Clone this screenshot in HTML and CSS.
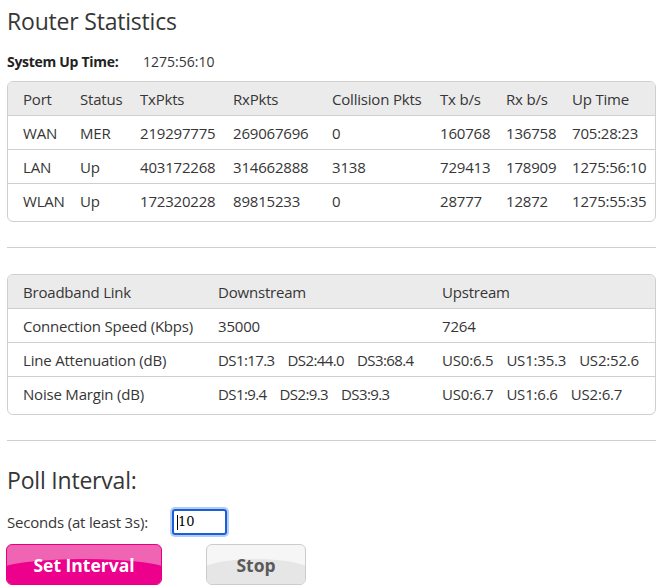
FILE: index.html
```html
<!DOCTYPE html>
<html>
<head>
<meta charset="utf-8">
<link rel="stylesheet" href="styles.css">
</head>
<body>
<div class="page">
  <h1 class="title">Router Statistics</h1>
  <div class="uptime"><span class="uptime-label">System Up Time:</span><span class="uptime-value">1275:56:10</span></div>

  <div class="box">
    <table class="stats">
      <colgroup>
        <col class="c1"><col class="c2"><col class="c3"><col class="c4"><col class="c5"><col class="c6"><col class="c7"><col class="c8">
      </colgroup>
      <thead>
        <tr><th>Port</th><th>Status</th><th>TxPkts</th><th>RxPkts</th><th>Collision Pkts</th><th>Tx b/s</th><th>Rx b/s</th><th>Up Time</th></tr>
      </thead>
      <tbody>
        <tr><td>WAN</td><td>MER</td><td>219297775</td><td>269067696</td><td>0</td><td>160768</td><td>136758</td><td>705:28:23</td></tr>
        <tr><td>LAN</td><td>Up</td><td>403172268</td><td>314662888</td><td>3138</td><td>729413</td><td>178909</td><td>1275:56:10</td></tr>
        <tr><td>WLAN</td><td>Up</td><td>172320228</td><td>89815233</td><td>0</td><td>28777</td><td>12872</td><td>1275:55:35</td></tr>
      </tbody>
    </table>
  </div>

  <hr class="rule">

  <div class="box">
    <table class="stats">
      <colgroup>
        <col class="d1"><col class="d2"><col class="d3">
      </colgroup>
      <thead>
        <tr><th>Broadband Link</th><th>Downstream</th><th>Upstream</th></tr>
      </thead>
      <tbody>
        <tr><td>Connection Speed (Kbps)</td><td>35000</td><td>7264</td></tr>
        <tr><td>Line Attenuation (dB)</td><td><span class="v ds">DS1:17.3</span><span class="v ds">DS2:44.0</span><span class="v ds">DS3:68.4</span></td><td><span class="v">US0:6.5</span><span class="v">US1:35.3</span><span class="v">US2:52.6</span></td></tr>
        <tr><td>Noise Margin (dB)</td><td><span class="v ds">DS1:9.4</span><span class="v ds">DS2:9.3</span><span class="v ds">DS3:9.3</span></td><td><span class="v">US0:6.7</span><span class="v">US1:6.6</span><span class="v">US2:6.7</span></td></tr>
      </tbody>
    </table>
  </div>

  <hr class="rule">

  <h2 class="subtitle">Poll Interval:</h2>
  <div class="field">
    <label class="field-label">Seconds (at least 3s):</label>
    <div class="input"><span class="caret"></span>10</div>
  </div>
  <div class="buttons">
    <button class="btn btn-pink"><span class="btn-text">Set Interval</span></button>
    <button class="btn btn-grey"><span class="btn-text">Stop</span></button>
  </div>
</div>
</body>
</html>
```
FILE: styles.css
```css
html, body {
  margin: 0;
  padding: 0;
  background: #fff;
}
body {
  font-family: "Open Sans", "Noto Sans", sans-serif;
  color: #363636;
  font-size: 15px;
}
.page {
  padding: 0 3px 0 7px;
}
.title {
  margin: 0;
  padding-top: 6px;
  font-size: 23px;
  font-weight: 400;
  line-height: 30px;
  color: #363636;
  letter-spacing: -0.2px;
}
.uptime {
  margin-top: 15px;
  display: flex;
  line-height: 22px;
  font-size: 14px;
}
.uptime-label {
  font-weight: 700;
  width: 136px;
  color: #222;
  letter-spacing: -0.3px;
}
.box {
  margin-top: 8px;
  border: 1px solid #cfcfcf;
  border-radius: 6px;
  overflow: hidden;
  padding-bottom: 4px;
}
.stats {
  width: 100%;
  border-collapse: collapse;
  table-layout: fixed;
  letter-spacing: -0.2px;
}
.stats th, .stats td {
  text-align: left;
  font-weight: 400;
  padding: 7px 0 6px 15px;
  line-height: 20px;
  white-space: nowrap;
  color: #363636;
}
.stats thead th {
  background: #ebebeb;
  border-bottom: 1px solid #cfcfcf;
}
.stats tbody tr + tr td {
  border-top: 1px solid #cfcfcf;
}
.c1 { width: 57px; }
.c2 { width: 60px; }
.c3 { width: 93px; }
.c4 { width: 99px; }
.c5 { width: 108px; }
.c6 { width: 66px; }
.c7 { width: 66px; }
.d1 { width: 195px; }
.d2 { width: 224px; }
.v {
  margin-right: 13px;
}
.ds {
  letter-spacing: -0.6px;
}
.rule {
  border: 0;
  border-top: 1px solid #cfcfcf;
  margin: 25px 0 26px 0;
}
.subtitle {
  margin: -2px 0 0 0;
  font-size: 23px;
  font-weight: 400;
  line-height: 30px;
  color: #363636;
  letter-spacing: -0.2px;
}
.field {
  display: flex;
  align-items: center;
  margin-top: 14px;
}
.field-label {
  width: 165px;
  letter-spacing: -0.2px;
}
.input {
  box-sizing: border-box;
  width: 55px;
  height: 26px;
  border: 2px solid #1a5fd8;
  border-radius: 3px;
  box-shadow: 0 0 0 2px #b5cdf2;
  font-family: "DejaVu Serif", serif;
  font-size: 13px;
  line-height: 22px;
  color: #000;
  padding-left: 3px;
  display: flex;
  align-items: center;
}
.caret {
  width: 1px;
  height: 15px;
  background: #000;
}
.buttons {
  display: flex;
  gap: 44px;
  margin-top: 9px;
  margin-left: -1px;
}
.btn {
  position: relative;
  height: 41px;
  border-radius: 6px;
  font-family: "Open Sans", "DejaVu Sans", sans-serif;
  font-weight: 700;
  font-size: 17.5px;
  padding: 0;
  overflow: hidden;
  cursor: pointer;
}
.btn::before {
  content: "";
  position: absolute;
  left: -6%;
  right: -6%;
  top: 14px;
  height: 60px;
  border-radius: 50% / 12px;
  z-index: 0;
}
.btn-text {
  position: relative;
  z-index: 1;
}
.btn-pink {
  width: 156px;
  background: #f064b4;
  color: #fff;
  border: 1px solid #e6007f;
}
.btn-pink::before {
  background: #ec008c;
}
.btn-grey {
  width: 100px;
  background: #f6f6f6;
  color: #5a5a5a;
  border: 1px solid #cccccc;
}
.btn-grey::before {
  background: #e6e6e6;
}
```
